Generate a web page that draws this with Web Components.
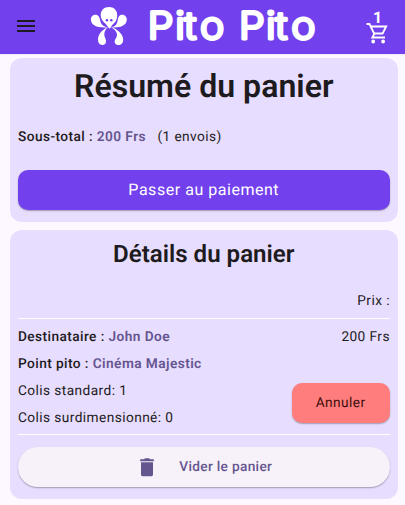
<!DOCTYPE html>
<html lang="fr">
<head>
<meta charset="utf-8">
<title>Pito Pito</title>
<style>
html,body{margin:0;height:505px;overflow:hidden;background:#fdf7ff}
body{font-family:Roboto,sans-serif;color:#1d1b20;text-rendering:geometricPrecision}
</style>
</head>
<body>
<cart-page></cart-page>
<script>
function define(name, html) {
  const t = document.createElement('template');
  t.innerHTML = html;
  customElements.define(name, class extends HTMLElement {
    constructor() {
      super();
      this.attachShadow({mode: 'open'}).appendChild(t.content.cloneNode(true));
    }
  });
}

define('menu-icon', `<style>:host{display:block;width:18px;height:12px}svg{display:block}</style>
<svg width="18" height="12" viewBox="0 0 18 12" fill="#1d1b20"><path d="M0 .1h18v1.800H0zM0 5.100h18v1.800H0zM0 10.100h18v1.800H0z"/></svg>`);

define('brand-logo', `<style>:host{display:block}svg{display:block}text{font-family:Inter,sans-serif;font-weight:300;font-size:37.800px;fill:#fff;stroke:#fff;stroke-width:3px;stroke-linejoin:round}</style>
<svg width="230" height="54" viewBox="90 0 230 54">
<g fill="#fff">
<path d="M109 7c-5 0-8.300 3.300-8.300 8 0 3.500 2 6.300 4.300 8.300 1.800 1.600 2.800 3.800 4.500 5.500 1.500-1.700 2.700-3.900 4.400-5.500 2.300-2 3.300-4.800 3.300-8.300 0-4.700-3.200-8-8.200-8z"/>
<path d="M96.200 14.700c-3.400-.5-5.900 2.200-5.200 5.800.8 4.700 5.500 7.600 17 6.900-4-.7-6.100-2.200-7-4.400-1.200-2.700-1-7.800-4.800-8.300z"/>
<path d="M121.300 14.700c3.400-.5 6.100 2.200 5.400 5.800-.8 4.700-5.500 7.600-16 6.900 4-.7 5.500-2.200 6.300-4.400 1.100-2.700.7-7.800 4.300-8.300z"/>
<path d="M107.700 27.200c-5.500 2.200-9.700 7.300-9.700 12.400 0 3.400 1.500 5.400 4.300 5.400 2.600 0 4-1.900 3.700-4.600-.3-2.300-1.800-3.600-1.700-6.200.1-2.800 1.400-5.200 3.400-7z"/>
<path d="M111 27.200c6.500 1.600 12 6.800 12.200 12.200.1 3.500-1.900 5.600-4.800 5.600-2.600 0-4.200-1.700-3.700-4.200.5-2.300 2.500-3.600 2.300-6.400-.2-3-2.900-5.500-6-7.200z"/>
</g>
<circle cx="107" cy="20.300" r="1.300" fill="#7340ed"/><circle cx="111.300" cy="20.300" r="1.300" fill="#7340ed"/>
<text transform="scale(1.08 1)" y="38.700" x="136.800 162.200 170.600 185.200 210 221.200 246.400 254.900 269.600">Pito Pito</text>
</svg>`);

define('cart-badge', `<style>:host{display:flex;flex-direction:column;align-items:center;width:26px;color:#fff}
span{font-size:16px;line-height:11px;font-weight:700;padding-left:1px}svg{display:block;margin-top:-1px}</style>
<span>1</span>
<svg width="26" height="24" viewBox="364 22 26 24" fill="none" stroke="#fff" stroke-width="1.800"><path d="M366.500 24h3l4.600 9.500h8.500l3.600-7h-15.400M374.500 33.500l-2.200 4h12.700"/><circle cx="373.200" cy="41.500" r="1" fill="#fff"/><circle cx="383.100" cy="41.500" r="1" fill="#fff"/></svg>`);

define('app-bar', `<style>:host{display:grid;grid-template-columns:90px 230px 1fr;height:54px;background:#7340ed;border-bottom:1px solid #f1e9fe}
menu-icon{margin:20px 0 0 17px}cart-badge{margin:12px 0 0 44px}</style>
<menu-icon></menu-icon><brand-logo></brand-logo><cart-badge></cart-badge>`);

define('cart-card', `<style>:host{display:flex;flex-direction:column;box-sizing:border-box;padding:0 8px;background:#e7ddff;border-radius:12px}</style><slot></slot>`);

define('card-title', `<style>:host{display:block;text-align:center;font-weight:600;white-space:nowrap}</style><slot></slot>`);

define('app-button', `<style>:host{display:flex;align-items:center;justify-content:center;height:40px;box-sizing:border-box;border-radius:10px;box-shadow:0 1px 1.500px rgba(0,0,0,.3);white-space:nowrap}</style><slot></slot>`);

define('text-line', `<style>:host{display:block;font-size:13.700px;line-height:20px;letter-spacing:.42px;white-space:pre}
:host([strong]){font-weight:500}::slotted(b){font-weight:600;color:#65558f}::slotted(i){font-style:normal;font-weight:400}</style><slot></slot>`);

define('rule-line', `<style>:host{display:block;height:1px;background:#fff}</style>`);

define('trash-icon', `<style>:host{display:block;width:14px;height:19px}svg{display:block}</style>
<svg width="14" height="19" viewBox="0 0 14 19" fill="#65558f"><path d="M.2 1.200h3.900L5 .3h4.200l.9.900h3.700v2H.200zM1 4.200h12v12.400c0 1-.7 1.700-1.700 1.700H2.700c-1 0-1.700-.7-1.700-1.700z"/></svg>`);

define('cart-page', `<style>
:host{display:block;height:505px}
main{display:flex;flex-direction:column;gap:8.300px;padding:3px 7.500px 0 10px}
.sum{height:164px}.det{height:268.300px}
.t1{font-size:32.100px;line-height:40px;padding-top:8px}
.t2{font-size:24.100px;line-height:30px;padding-top:9px}
.sub{margin-top:20.700px}
.pay{margin-top:23.300px;background:#7340ed;color:#fff;font-size:16px;letter-spacing:.53px}
.price{text-align:right;margin-top:22.200px;margin-right:-.4px}
.r1{margin-top:6.500px}
.row{display:flex;justify-content:space-between;margin-top:8.500px}
.left{display:flex;flex-direction:column;gap:6.700px}
.right{display:flex;flex-direction:column;align-items:flex-end;justify-content:space-between;height:95.300px}
.right text-line{margin-right:-.4px}
.cancel{width:97.700px;background:#ff7d7d;color:#410e0b;font-size:13.700px;letter-spacing:.42px;padding-top:1px}
.r2{margin-top:6.800px}
.clear{margin-top:12px;border-radius:20px;background:#f7f2fa;color:#65558f;font-size:13.700px;letter-spacing:.32px;font-weight:500;padding-left:5px}
.clear trash-icon{margin-right:25px}
</style>
<app-bar></app-bar>
<main>
<cart-card class="sum">
<card-title class="t1">Résumé du panier</card-title>
<text-line strong class="sub">Sous-total : <b>200 Frs</b><i>   (1 envois)</i></text-line>
<app-button class="pay">Passer au paiement</app-button>
</cart-card>
<cart-card class="det">
<card-title class="t2">Détails du panier</card-title>
<text-line class="price">Prix :</text-line>
<rule-line class="r1"></rule-line>
<div class="row">
<div class="left">
<text-line strong>Destinataire : <b>John Doe</b></text-line>
<text-line strong>Point pito : <b>Cinéma Majestic</b></text-line>
<text-line>Colis standard: 1</text-line>
<text-line>Colis surdimensionné: 0</text-line>
</div>
<div class="right"><text-line>200 Frs</text-line><app-button class="cancel">Annuler</app-button></div>
</div>
<rule-line class="r2"></rule-line>
<app-button class="clear"><trash-icon></trash-icon>Vider le panier</app-button>
</cart-card>
</main>`);
</script>
</body>
</html>
